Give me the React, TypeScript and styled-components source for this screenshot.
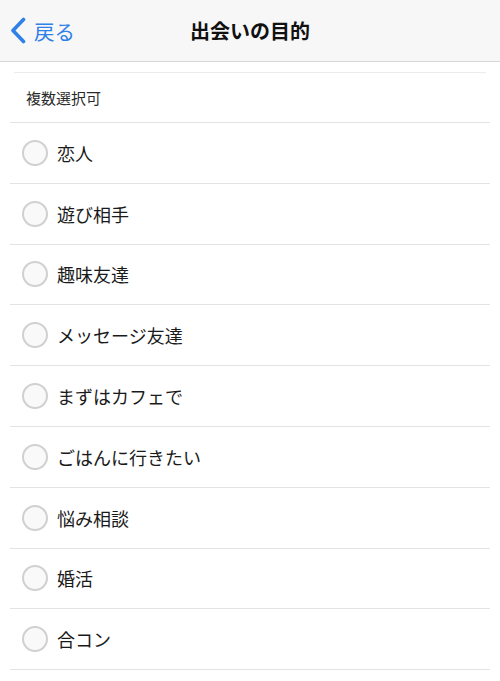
import styled, { createGlobalStyle } from 'styled-components';

const GlobalStyle = createGlobalStyle`
  html, body {
    margin: 0;
    padding: 0;
    background: #fff;
  }
  body {
    font-family: "Noto Sans CJK JP", "Noto Sans", sans-serif;
    -webkit-font-smoothing: antialiased;
  }
`;

const Page = styled.div`
  width: 500px;
  min-height: 681px;
  background: #fff;
`;

const NavBar = styled.header`
  height: 61px;
  background: #f7f7f7;
  border-bottom: 1px solid #d8d8d8;
  display: grid;
  grid-template-columns: 120px 1fr 120px;
  align-items: center;
`;

const BackButton = styled.button`
  display: flex;
  align-items: center;
  gap: 8px;
  padding: 0 0 0 10px;
  border: none;
  background: none;
  color: #2f80e7;
  font-family: inherit;
  font-size: 20.5px;
  cursor: pointer;
  svg {
    display: block;
  }
`;

const Title = styled.h1`
  margin: 0;
  text-align: center;
  font-size: 20px;
  font-weight: 700;
  color: #111;
`;

const Content = styled.main`
  padding: 10px 10px 0;
`;

const SectionHeader = styled.div`
  margin: 0 4px;
  border-top: 1px solid #ececec;
  height: 49px;
  display: flex;
  align-items: center;
  padding-left: 12px;
  font-size: 15px;
  color: #2a2a2a;
`;

const List = styled.ul`
  list-style: none;
  margin: 0;
  padding: 0;
  border-top: 1px solid #e3e3e3;
`;

const Row = styled.li`
  height: 59.8px;
  border-bottom: 1px solid #e3e3e3;
  display: flex;
  align-items: center;
  gap: 9px;
  padding-left: 12px;
  font-size: 18px;
  color: #1a1a1a;
`;

const Radio = styled.span<{ $checked?: boolean }>`
  width: 22px;
  height: 22px;
  border-radius: 50%;
  border: 2px solid #d0d0d0;
  background: ${({ $checked }) => ($checked ? '#2f80e7' : '#f9f9f9')};
  flex-shrink: 0;
`;

const purposes = [
  '恋人',
  '遊び相手',
  '趣味友達',
  'メッセージ友達',
  'まずはカフェで',
  'ごはんに行きたい',
  '悩み相談',
  '婚活',
  '合コン',
];

export default function App() {
  return (
    <Page>
      <GlobalStyle />
      <NavBar>
        <BackButton>
          <svg width="16" height="27" viewBox="0 0 16 27" fill="none">
            <path
              d="M13.5 2.5 L3 13.5 L13.5 24.5"
              stroke="currentColor"
              strokeWidth="3.6"
              strokeLinecap="round"
              strokeLinejoin="round"
            />
          </svg>
          戻る
        </BackButton>
        <Title>出会いの目的</Title>
        <div />
      </NavBar>
      <Content>
        <SectionHeader>複数選択可</SectionHeader>
        <List>
          {purposes.map((p) => (
            <Row key={p}>
              <Radio />
              {p}
            </Row>
          ))}
        </List>
      </Content>
    </Page>
  );
}
